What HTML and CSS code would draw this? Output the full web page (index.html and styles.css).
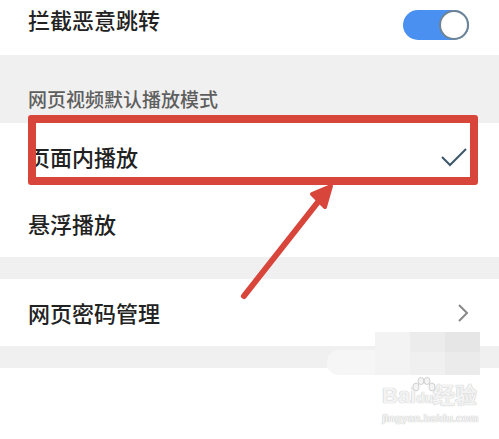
FILE: index.html
```html
<!DOCTYPE html>
<html lang="zh-CN">
<head>
  <meta charset="UTF-8">
  <meta name="viewport" content="width=device-width, initial-scale=1.0">
  <title>浏览器设置</title>
  <link rel="stylesheet" href="styles.css">
</head>
<body>
  <div class="page">
    <div class="row row-top">
      <span class="label">拦截恶意跳转</span>
      <span class="switch on"><span class="knob"></span></span>
    </div>

    <div class="section-title">网页视频默认播放模式</div>
    <div class="row">
      <span class="label">页面内播放</span>
      <svg class="check" width="26" height="20" viewBox="0 0 26 20">
        <path d="M1 10 L9 18 L25 2" fill="none" stroke="#3c5868" stroke-width="2"/>
      </svg>
    </div>
    <div class="row">
      <span class="label">悬浮播放</span>
    </div>

    <div class="gap"></div>
    <div class="row">
      <span class="label">网页密码管理</span>
      <svg class="chevron" width="12" height="18" viewBox="0 0 12 18">
        <path d="M2 1 L10 9 L2 17" fill="none" stroke="#888" stroke-width="2"/>
      </svg>
    </div>
    <div class="gap"></div>
    <div class="bottom"></div>

    <div class="highlight"></div>
    <svg class="arrow" width="499" height="439" viewBox="0 0 499 439">
      <line x1="244" y1="296" x2="318" y2="202" stroke="#d8453a" stroke-width="6" stroke-linecap="round"/>
      <polygon points="331,186 312,194 325,207" fill="#d8453a" stroke="#d8453a" stroke-width="4" stroke-linejoin="round"/>
    </svg>

    <div class="mosaic-light"></div>
    <div class="mosaic">
      <span class="m1"></span><span class="m2"></span><span class="m3"></span>
      <span class="m4"></span><span class="m5"></span><span class="m6"></span>
    </div>
    <div class="watermark">
      <svg class="paw" width="24" height="16" viewBox="0 0 24 16">
        <g fill="#f4f4f4" stroke="#d0d0d0" stroke-width="1">
          <ellipse cx="4" cy="10" rx="3" ry="4"/>
          <ellipse cx="9" cy="4" rx="3" ry="3.5"/>
          <ellipse cx="15" cy="4" rx="3" ry="3.5"/>
          <ellipse cx="20" cy="10" rx="3" ry="4"/>
        </g>
      </svg>
      <div class="wm-logo">Bai<span class="wm-du">du</span>经验</div>
      <div class="wm-url">jingyan.baidu.com</div>
    </div>
  </div>
</body>
</html>
```

FILE: styles.css
```css
body {
  margin: 0;
  background: #fff;
  font-family: "Noto Sans CJK SC", "Noto Sans", sans-serif;
}

.page {
  position: relative;
  width: 499px;
  height: 439px;
  overflow: hidden;
  background: #f0f0f0;
}

.row {
  display: flex;
  align-items: center;
  justify-content: space-between;
  height: 67px;
  padding: 0 30px 0 28px;
  background: #fff;
}

.row-top {
  height: 55px;
  align-items: flex-start;
  padding-top: 6px;
  box-sizing: border-box;
}

.label {
  font-size: 22px;
  font-weight: 500;
  color: #222;
  line-height: 1.2;
}

.switch {
  position: relative;
  width: 66px;
  height: 30px;
  margin-top: 4px;
  border-radius: 15px;
  background: #4a90f0;
}

.knob {
  position: absolute;
  top: 0;
  right: 0;
  width: 30px;
  height: 30px;
  box-sizing: border-box;
  border-radius: 50%;
  background: #fff;
  border: 2px solid #6e8494;
}

.section-title {
  height: 68px;
  box-sizing: border-box;
  padding: 30px 0 0 28px;
  font-size: 19px;
  font-weight: 500;
  color: #5e5e5e;
}

.check {
  margin-right: 2px;
}

.gap {
  height: 22px;
}

.bottom {
  height: 80px;
  background: #fff;
}

.highlight {
  position: absolute;
  left: 28px;
  top: 115px;
  width: 450px;
  height: 70px;
  box-sizing: border-box;
  border: 8px solid #d8453a;
  border-radius: 3px;
}

.arrow {
  position: absolute;
  left: 0;
  top: 0;
}

.mosaic-light {
  position: absolute;
  left: 327px;
  top: 350px;
  width: 153px;
  height: 25px;
  border-radius: 12px 0 0 12px;
  background: #f6f6f6;
}

.mosaic {
  position: absolute;
  left: 375px;
  top: 332px;
  display: grid;
  grid-template-columns: repeat(3, 35px);
  grid-template-rows: 20px 23px;
}

.mosaic span { background: #f3f3f3; }
.mosaic .m2 { background: #ececec; }
.mosaic .m3 { background: #e6e6e6; }
.mosaic .m5 { background: #f0f0f0; }
.mosaic .m6 { background: #ebebeb; }

.watermark {
  position: absolute;
  left: 382px;
  top: 383px;
  color: #f3f3f3;
  text-shadow: 0 0 1px #c8c8c8, 0 0 1px #c8c8c8;
}

.paw {
  position: absolute;
  left: 30px;
  top: -6px;
}

.wm-logo {
  font-family: "Liberation Sans", sans-serif;
  font-size: 22px;
  font-weight: bold;
  line-height: 26px;
}

.wm-du {
  font-size: 14px;
}

.wm-url {
  font-family: "Liberation Sans", sans-serif;
  font-size: 11px;
  font-weight: bold;
  line-height: 14px;
}
```
